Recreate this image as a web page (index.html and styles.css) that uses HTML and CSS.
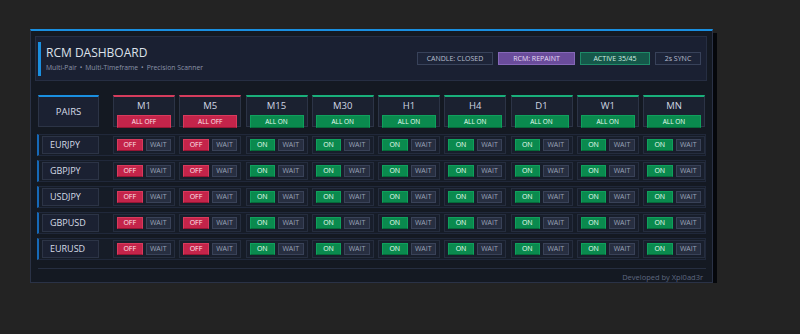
FILE: index.html
```html
<!DOCTYPE html>
<html lang="en">
<head>
	<meta charset="UTF-8">
	<title>RCM Dashboard</title>
	<link rel="stylesheet" href="styles.css">
</head>
<body>
	<div class="panel">
		<div class="top">
			<div class="brand">
				<div class="title">RCM DASHBOARD</div>
				<div class="sub">Multi-Pair<i>•</i>Multi-Timeframe<i>•</i>Precision Scanner</div>
			</div>
			<div class="badges">
				<span class="badge">CANDLE: CLOSED</span>
				<span class="badge purple">RCM: REPAINT</span>
				<span class="badge teal">ACTIVE 35/45</span>
				<span class="badge">2s SYNC</span>
			</div>
		</div>

		<div class="table">
			<div class="head">
				<div class="pairs-head">PAIRS</div>
				<div class="tf red"><span>M1</span><b class="all off">ALL OFF</b></div>
				<div class="tf red"><span>M5</span><b class="all off">ALL OFF</b></div>
				<div class="tf"><span>M15</span><b class="all">ALL ON</b></div>
				<div class="tf"><span>M30</span><b class="all">ALL ON</b></div>
				<div class="tf"><span>H1</span><b class="all">ALL ON</b></div>
				<div class="tf"><span>H4</span><b class="all">ALL ON</b></div>
				<div class="tf"><span>D1</span><b class="all">ALL ON</b></div>
				<div class="tf"><span>W1</span><b class="all">ALL ON</b></div>
				<div class="tf"><span>MN</span><b class="all">ALL ON</b></div>
			</div>

			<div class="row">
				<div class="pair">EURJPY</div>
				<div class="cell"><b class="btn off">OFF</b><b class="btn wait">WAIT</b></div>
				<div class="cell"><b class="btn off">OFF</b><b class="btn wait">WAIT</b></div>
				<div class="cell"><b class="btn on">ON</b><b class="btn wait">WAIT</b></div>
				<div class="cell"><b class="btn on">ON</b><b class="btn wait">WAIT</b></div>
				<div class="cell"><b class="btn on">ON</b><b class="btn wait">WAIT</b></div>
				<div class="cell"><b class="btn on">ON</b><b class="btn wait">WAIT</b></div>
				<div class="cell"><b class="btn on">ON</b><b class="btn wait">WAIT</b></div>
				<div class="cell"><b class="btn on">ON</b><b class="btn wait">WAIT</b></div>
				<div class="cell"><b class="btn on">ON</b><b class="btn wait">WAIT</b></div>
			</div>
			<div class="row">
				<div class="pair">GBPJPY</div>
				<div class="cell"><b class="btn off">OFF</b><b class="btn wait">WAIT</b></div>
				<div class="cell"><b class="btn off">OFF</b><b class="btn wait">WAIT</b></div>
				<div class="cell"><b class="btn on">ON</b><b class="btn wait">WAIT</b></div>
				<div class="cell"><b class="btn on">ON</b><b class="btn wait">WAIT</b></div>
				<div class="cell"><b class="btn on">ON</b><b class="btn wait">WAIT</b></div>
				<div class="cell"><b class="btn on">ON</b><b class="btn wait">WAIT</b></div>
				<div class="cell"><b class="btn on">ON</b><b class="btn wait">WAIT</b></div>
				<div class="cell"><b class="btn on">ON</b><b class="btn wait">WAIT</b></div>
				<div class="cell"><b class="btn on">ON</b><b class="btn wait">WAIT</b></div>
			</div>
			<div class="row">
				<div class="pair">USDJPY</div>
				<div class="cell"><b class="btn off">OFF</b><b class="btn wait">WAIT</b></div>
				<div class="cell"><b class="btn off">OFF</b><b class="btn wait">WAIT</b></div>
				<div class="cell"><b class="btn on">ON</b><b class="btn wait">WAIT</b></div>
				<div class="cell"><b class="btn on">ON</b><b class="btn wait">WAIT</b></div>
				<div class="cell"><b class="btn on">ON</b><b class="btn wait">WAIT</b></div>
				<div class="cell"><b class="btn on">ON</b><b class="btn wait">WAIT</b></div>
				<div class="cell"><b class="btn on">ON</b><b class="btn wait">WAIT</b></div>
				<div class="cell"><b class="btn on">ON</b><b class="btn wait">WAIT</b></div>
				<div class="cell"><b class="btn on">ON</b><b class="btn wait">WAIT</b></div>
			</div>
			<div class="row">
				<div class="pair">GBPUSD</div>
				<div class="cell"><b class="btn off">OFF</b><b class="btn wait">WAIT</b></div>
				<div class="cell"><b class="btn off">OFF</b><b class="btn wait">WAIT</b></div>
				<div class="cell"><b class="btn on">ON</b><b class="btn wait">WAIT</b></div>
				<div class="cell"><b class="btn on">ON</b><b class="btn wait">WAIT</b></div>
				<div class="cell"><b class="btn on">ON</b><b class="btn wait">WAIT</b></div>
				<div class="cell"><b class="btn on">ON</b><b class="btn wait">WAIT</b></div>
				<div class="cell"><b class="btn on">ON</b><b class="btn wait">WAIT</b></div>
				<div class="cell"><b class="btn on">ON</b><b class="btn wait">WAIT</b></div>
				<div class="cell"><b class="btn on">ON</b><b class="btn wait">WAIT</b></div>
			</div>
			<div class="row">
				<div class="pair">EURUSD</div>
				<div class="cell"><b class="btn off">OFF</b><b class="btn wait">WAIT</b></div>
				<div class="cell"><b class="btn off">OFF</b><b class="btn wait">WAIT</b></div>
				<div class="cell"><b class="btn on">ON</b><b class="btn wait">WAIT</b></div>
				<div class="cell"><b class="btn on">ON</b><b class="btn wait">WAIT</b></div>
				<div class="cell"><b class="btn on">ON</b><b class="btn wait">WAIT</b></div>
				<div class="cell"><b class="btn on">ON</b><b class="btn wait">WAIT</b></div>
				<div class="cell"><b class="btn on">ON</b><b class="btn wait">WAIT</b></div>
				<div class="cell"><b class="btn on">ON</b><b class="btn wait">WAIT</b></div>
				<div class="cell"><b class="btn on">ON</b><b class="btn wait">WAIT</b></div>
			</div>
		</div>

		<div class="footer">Developed by Xpl0ad3r</div>
	</div>
</body>
</html>
```
FILE: styles.css
```css
* { margin: 0; padding: 0; box-sizing: border-box; }
body {
	background-color: #232323;
	padding: 29px 0 0 30px;
	font-family: "Open Sans", "Noto Sans", sans-serif;
	color: #d6dbe6;
}
b { font-weight: normal; }

.panel {
	width: 683px;
	background-color: #141922;
	border: 1px solid #2a3246;
	border-top: 2px solid #1a8fe0;
	padding: 5px 5px 0 4px;
	box-shadow: 4px 4px 0 #05070b;
}

/* header */
.top {
	height: 45px;
	background-color: #1a2032;
	border: 1px solid #262e42;
	display: flex;
	align-items: center;
	justify-content: space-between;
	padding: 0 5px 0 2px;
}
.brand {
	border-left: 3px solid #1a8fe0;
	padding: 3px 0 3px 5px;
}
.title {
	font-size: 12px;
	line-height: 16px;
	color: #dde1ea;
}
.sub {
	font-size: 6.8px;
	line-height: 10px;
	color: #8a93a8;
	margin-top: 2px;
}
.sub i {
	font-style: normal;
	margin: 0 3px;
}
.badges {
	display: flex;
	gap: 5px;
}
.badge {
	height: 13px;
	line-height: 11px;
	font-size: 7px;
	padding: 0 4px;
	background-color: #1d2438;
	border: 1px solid #38425a;
	color: #b8bfcf;
	text-align: center;
}
.badge:first-child { width: 76px; }
.badge.purple { width: 77px; background-color: #6a4c9b; border-color: #8568b8; color: #e6dcf4; }
.badge.teal { width: 70px; background-color: #15584a; border-color: #1e8a68; color: #cfeee2; }
.badge:last-child { width: 46px; }

/* table */
.table {
	margin: 14px 0 0 2px;
	width: 669px;
}
.head {
	display: flex;
	gap: 4.25px;
	padding-left: 1px;
	height: 32px;
	margin-bottom: 7px;
}
.pairs-head {
	width: 61px;
	margin-right: 9.75px;
	background-color: #1b2132;
	border: 1px solid #2c3446;
	border-top: 2px solid #1a8fe0;
	font-size: 9.5px;
	display: flex;
	align-items: center;
	justify-content: center;
	color: #d6dbe6;
}
.tf {
	width: 62px;
	background-color: #1b2130;
	border: 1px solid #2c3446;
	border-top: 2px solid #19b07a;
	display: flex;
	flex-direction: column;
	align-items: center;
	padding-top: 2px;
}
.tf.red { border-top-color: #d63c5c; }
.tf span {
	font-size: 9.5px;
	line-height: 14px;
	color: #d0d6e2;
}
.all {
	width: 54px;
	height: 13px;
	margin-top: 2px;
	font-size: 6.5px;
	line-height: 12px;
	text-align: center;
	color: #e8fff2;
	background-color: #0a8a4e;
	border: 1px solid #0fa05c;
	border-bottom-color: #066a3a;
}
.all.off {
	color: #ffe6ec;
	background-color: #c4244a;
	border-color: #d83a5c;
	border-bottom-color: #961634;
}

.row {
	display: flex;
	align-items: center;
	gap: 4.25px;
	height: 22px;
	margin-bottom: 4px;
	background-color: #161c27;
	border: 1px solid #20283a;
	border-left: 2px solid #1669b8;
	padding-left: 3px;
}
.pair {
	width: 57px;
	height: 18px;
	margin-right: 9.75px;
	background-color: #1b2132;
	border: 1px solid #2c3446;
	font-size: 9px;
	line-height: 16px;
	padding-left: 7px;
	color: #d6dbe6;
}
.cell {
	width: 62px;
	height: 18px;
	display: flex;
	align-items: center;
	gap: 3px;
	padding: 0 3px;
	background-color: #181e2b;
	border: 1px solid #252d3e;
}
.btn {
	width: 26px;
	height: 12px;
	font-size: 7px;
	line-height: 10px;
	text-align: center;
	border: 1px solid;
}
.btn.off { background-color: #c4244a; border-color: #d83a5c; border-bottom-color: #961634; color: #ffe6ec; }
.btn.on { background-color: #0a8a4e; border-color: #0fa05c; border-bottom-color: #066a3a; color: #e8fff2; }
.btn.wait { background-color: #272e40; border-color: #394258; color: #9aa3b8; }

.footer {
	margin: 8px 1px 0 3px;
	border-top: 1px solid #262e40;
	padding: 4px 3px 0 0;
	font-size: 7.5px;
	line-height: 9px;
	text-align: right;
	color: #5f6880;
}
```
